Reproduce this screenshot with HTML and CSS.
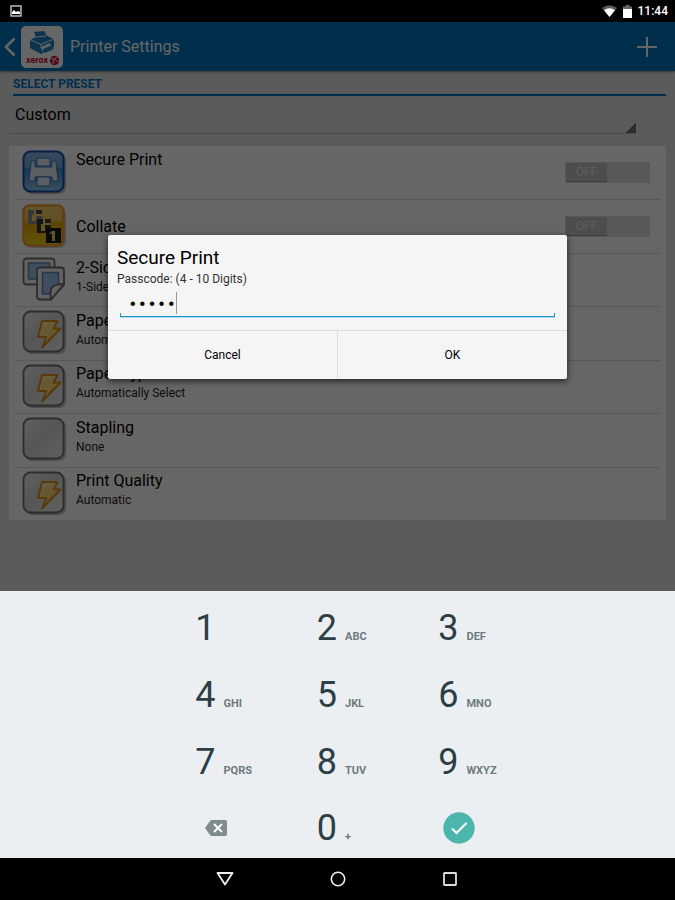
FILE: index.html
```html
<!DOCTYPE html>
<html lang="en">
<head>
  <meta charset="UTF-8">
  <meta name="viewport" content="width=device-width, initial-scale=1.0">
  <title>Printer Settings</title>
  <link rel="stylesheet" href="styles.css">
</head>
<body>
  <!-- Shared icon shapes -->
  <svg class="defs" width="0" height="0" aria-hidden="true">
    <defs>
      <linearGradient id="grayFill" x1="0" y1="0" x2="1" y2="1">
        <stop offset="0" stop-color="#f2f2f2"></stop>
        <stop offset="0.45" stop-color="#d6d6d6"></stop>
        <stop offset="1" stop-color="#f2f2f2"></stop>
      </linearGradient>
      <linearGradient id="blueFill" x1="0" y1="0" x2="0" y2="1">
        <stop offset="0" stop-color="#8fb8e4"></stop>
        <stop offset="0.4" stop-color="#6fabe0"></stop>
        <stop offset="0.45" stop-color="#3f8fd0"></stop>
        <stop offset="1" stop-color="#8cc8ee"></stop>
      </linearGradient>
      <linearGradient id="goldFill" x1="0" y1="0" x2="0" y2="1">
        <stop offset="0" stop-color="#f7d27a"></stop>
        <stop offset="0.38" stop-color="#f0c850"></stop>
        <stop offset="0.45" stop-color="#e0a800"></stop>
        <stop offset="1" stop-color="#f8d020"></stop>
      </linearGradient>
      <linearGradient id="boltFill" x1="0" y1="0" x2="0" y2="1">
        <stop offset="0" stop-color="#ffe9a8"></stop>
        <stop offset="1" stop-color="#ffc21e"></stop>
      </linearGradient>
      <symbol id="tile" viewBox="0 0 44 44">
        <rect x="3" y="3" width="41" height="41" rx="7" fill="#000" opacity="0.25"></rect>
        <rect x="1.500" y="1.500" width="40" height="40" rx="7" fill="url(#grayFill)" stroke="#707070" stroke-width="1.800"></rect>
      </symbol>
      <symbol id="bolt" viewBox="0 0 44 44">
        <path d="M20 11h15.500l-4 7.500h7L20 37.500l4.500-10.500h-8.500z" fill="url(#boltFill)" stroke="#dc9018" stroke-width="2" stroke-linejoin="round"></path>
        <path d="M22 13l-4 12h9l-3 6" fill="none" stroke="#fff0c0" stroke-width="1"></path>
      </symbol>
    </defs>
  </svg>

  <!-- Status bar -->
  <div class="status-bar">
    <svg width="12" height="12" viewBox="0 0 12 12" fill="none">
      <rect x="1" y="1" width="10" height="10" stroke="#c8c8c8" stroke-width="1.4"></rect>
      <path d="M2 9V7l2-2 2 2 2-1 2 1v2z" fill="#fff"></path>
    </svg>
    <div class="status-right">
      <svg width="15" height="12" viewBox="0 0 15 12">
        <path d="M0 3Q7.500-2.500 15 3L7.500 12z" fill="#5a5a5a"></path>
        <path d="M2 5.200Q7.500 1.500 13 5.200L7.500 12z" fill="#fff"></path>
      </svg>
      <svg width="9" height="13" viewBox="0 0 9 13">
        <path d="M0 1.500h2.500V0h4v1.500H9V4H0z" fill="#666"></path>
        <path d="M0 4h9v9H0z" fill="#fff"></path>
      </svg>
      <span class="clock">11:44</span>
    </div>
  </div>

  <!-- App screen with the dialog on top -->
  <div class="screen">
    <header class="app-header">
      <button class="icon-button back" aria-label="Back">
        <svg width="12" height="20" viewBox="0 0 12 20" fill="none" stroke="#fff" stroke-width="2.500"><path d="M10.500 1.500L2 10l8.500 8.500"></path></svg>
      </button>
      <svg class="app-logo" width="42" height="42" viewBox="0 0 42 42">
        <rect width="42" height="42" rx="5" fill="#fff"></rect>
        <path d="M13 6l10-1 3 5 7 3v8l-13 7-11-6v-8l6-3z" fill="#1c83c4"></path>
        <path d="M9 13.500l11 5 13-5.500M20 18.500V22M15 11l10-1" fill="none" stroke="#fff" stroke-width="1"></path>
        <path d="M20 21l9-4 1 3-9 5z" fill="#fff"></path>
        <path d="M22 23l7-3 4 3-9 4z" fill="#1c83c4"></path>
        <text x="5" y="37" class="logo-text">xerox</text>
        <circle cx="33.500" cy="34.500" r="4.700" fill="#c8102e"></circle>
        <path d="M29 33c3-1 6 1 9 3M36 31c-3 1-4 4-4 7" fill="none" stroke="#fff" stroke-width="1"></path>
      </svg>
      <h1>Printer Settings</h1>
      <button class="icon-button add" aria-label="Add preset">
        <svg width="20" height="20" viewBox="0 0 20 20" stroke="#fff" stroke-width="2"><path d="M10 0v20M0 10h20"></path></svg>
      </button>
    </header>

    <main class="settings">
      <label class="section-title" for="preset">SELECT PRESET</label>
      <select id="preset" class="preset">
        <option>Custom</option>
      </select>

      <ul class="options">
        <li class="option">
          <svg class="option-icon" viewBox="0 0 44 44">
            <rect x="3" y="3" width="41" height="41" rx="7" fill="#000" opacity="0.25"></rect>
            <rect x="1.500" y="1.500" width="40" height="40" rx="7" fill="url(#blueFill)" stroke="#1d4fae" stroke-width="2"></rect>
            <g fill="#e6edf5" stroke="#3c6fb8" stroke-width="1" stroke-linejoin="round">
              <path d="M15 8h13v8H15z"></path>
              <path d="M10 11h2q1 0 1 2v4h17v-4q0-2 1-2h2q1 0 1 2l2 16q0 2-2 2h-4v-4H13v4H9q-2 0-2-2l2-16q0-2 1-2z"></path>
              <path d="M15 27h13v9H15z"></path>
            </g>
          </svg>
          <div class="option-text"><h2>Secure Print</h2><p></p></div>
          <label class="switch"><input type="checkbox" aria-label="Secure Print"><span>OFF</span></label>
        </li>
        <li class="option">
          <svg class="option-icon" viewBox="0 0 44 44">
            <rect x="3" y="3" width="41" height="41" rx="7" fill="#000" opacity="0.2"></rect>
            <rect x="1.500" y="1.500" width="40" height="40" rx="6" fill="url(#goldFill)" stroke="#f0a030" stroke-width="2.500"></rect>
            <path d="M6 6h14v14H6z" fill="#8a8a8a"></path>
            <path d="M15 15h14v14H15z" fill="#333"></path>
            <path d="M24 24h15v15H24z" fill="#1a1a1a"></path>
            <path d="M12 6h8v6h-6v5h-4v-6h2zM21 15h8v6h-6v6h-4v-7h2zM33 27v10h-3v-7h-3l3-3z" fill="#f5d468"></path>
            <path d="M14 6h6v4h-6zM23 15h6v4h-6z" fill="#444"></path>
          </svg>
          <div class="option-text"><h2>Collate</h2></div>
          <label class="switch"><input type="checkbox" aria-label="Collate"><span>OFF</span></label>
        </li>
        <li class="option">
          <svg class="option-icon" viewBox="0 0 44 44" stroke-linejoin="round">
            <rect x="1.500" y="1.500" width="31" height="26" rx="3" fill="#f4f4f4" stroke="#707070" stroke-width="1.800"></rect>
            <path d="M6.500 6h21v16h-21z" fill="#9cc4e8" stroke="#5b86bd" stroke-width="1.500"></path>
            <path d="M18 10.500h21q3 0 3 3V28L29 42.500H18q-3 0-3-3v-26q0-3 3-3z" fill="#f4f4f4" stroke="#707070" stroke-width="1.800"></path>
            <path d="M20.500 15.500h16V28l-8 9h-8z" fill="#9cc4e8" stroke="#5b86bd" stroke-width="1.500"></path>
            <path d="M42 27L29 42.500q-1-7 0-10.500 2-5 13-5z" fill="#f4f4f4" stroke="#707070" stroke-width="1.800"></path>
          </svg>
          <div class="option-text"><h2>2-Sided</h2><p>1-Sided</p></div>
        </li>
        <li class="option">
          <svg class="option-icon" viewBox="0 0 44 44"><use href="#tile"></use><use href="#bolt"></use></svg>
          <div class="option-text"><h2>Paper Size</h2><p>Automatic</p></div>
        </li>
        <li class="option">
          <svg class="option-icon" viewBox="0 0 44 44"><use href="#tile"></use><use href="#bolt"></use></svg>
          <div class="option-text"><h2>Paper Type</h2><p>Automatically Select</p></div>
        </li>
        <li class="option">
          <svg class="option-icon" viewBox="0 0 44 44"><use href="#tile"></use></svg>
          <div class="option-text"><h2>Stapling</h2><p>None</p></div>
        </li>
        <li class="option">
          <svg class="option-icon" viewBox="0 0 44 44"><use href="#tile"></use><use href="#bolt"></use></svg>
          <div class="option-text"><h2>Print Quality</h2><p>Automatic</p></div>
        </li>
      </ul>
    </main>

    <div class="overlay">
      <form class="dialog" role="dialog" aria-labelledby="dialogTitle">
        <div class="dialog-body">
          <h2 id="dialogTitle">Secure Print</h2>
          <label for="passcode">Passcode: (4 - 10 Digits)</label>
          <div class="passcode-field">
            <input type="password" id="passcode" value="12345" maxlength="10">
            <span class="caret"></span>
          </div>
        </div>
        <div class="dialog-buttons">
          <button type="button">Cancel</button>
          <button type="button">OK</button>
        </div>
      </form>
    </div>
  </div>

  <!-- Number keypad -->
  <div class="keypad">
    <div class="keys">
      <button class="key">1</button>
      <button class="key">2<small>ABC</small></button>
      <button class="key">3<small>DEF</small></button>
      <button class="key">4<small>GHI</small></button>
      <button class="key">5<small>JKL</small></button>
      <button class="key">6<small>MNO</small></button>
      <button class="key">7<small>PQRS</small></button>
      <button class="key">8<small>TUV</small></button>
      <button class="key">9<small>WXYZ</small></button>
      <button class="key action" aria-label="Delete">
        <svg width="22" height="16" viewBox="0 0 22 16">
          <path d="M7 0h13q2 0 2 2v12q0 2-2 2H7q-1 0-2-1L0 8l5-7q1-1 2-1z" fill="#7f8b8f"></path>
          <path d="M9 4l8 8M17 4l-8 8" stroke="#fff" stroke-width="2"></path>
        </svg>
      </button>
      <button class="key">0<small>+</small></button>
      <button class="key action" aria-label="Done">
        <svg width="32" height="32" viewBox="0 0 32 32">
          <circle cx="16" cy="16" r="15.700" fill="#4db6ac"></circle>
          <path d="M9 16.500l4.500 4.500L23.500 11" fill="none" stroke="#fff" stroke-width="2"></path>
        </svg>
      </button>
    </div>
  </div>

  <!-- System navigation -->
  <nav class="nav-bar">
    <button aria-label="Back"><svg width="18" height="16" viewBox="0 0 18 16"><path d="M1.500 2h15L9 13.500z" fill="none" stroke="#eee" stroke-width="1.800" stroke-linejoin="round"></path></svg></button>
    <button aria-label="Home"><svg width="16" height="16" viewBox="0 0 16 16"><circle cx="8" cy="8" r="6.700" fill="none" stroke="#eee" stroke-width="1.600"></circle></svg></button>
    <button aria-label="Recent apps"><svg width="14" height="14" viewBox="0 0 14 14"><rect x="1" y="1" width="12" height="12" rx="0.500" fill="none" stroke="#ddd" stroke-width="1.800"></rect></svg></button>
  </nav>
</body>
</html>
```
FILE: styles.css
```css
/* Reset and base styles */
* {
  margin: 0;
  padding: 0;
  box-sizing: border-box;
}

body {
  background-color: #000;
  color: #000;
  font-family: Roboto, sans-serif;
  font-size: 16px;
  min-height: 100vh;
  display: flex;
  flex-direction: column;
}

button,
select,
input {
  font-family: inherit;
  background: none;
  border: none;
  border-radius: 0;
  color: inherit;
}

button {
  cursor: pointer;
}

svg {
  display: block;
  flex: none;
}

.defs {
  position: absolute;
}

/* Status bar */
.status-bar {
  height: 22px;
  padding: 0 7px 0 10px;
  display: flex;
  justify-content: space-between;
  align-items: center;
  color: #fff;
}

.status-right {
  display: flex;
  align-items: center;
  gap: 6px;
}

.clock {
  font-size: 12px;
  font-weight: 500;
  line-height: 22px;
}

/* App screen */
.screen {
  flex: 1;
  position: relative;
  background-color: #e4e4e4;
}

.app-header {
  height: 49px;
  padding: 0 18px 0 4px;
  display: flex;
  align-items: center;
  background-color: #0077c4;
  box-shadow: 0 1px 2px rgba(0, 0, 0, 0.4);
  color: #fff;
}

.app-header h1 {
  flex: 1;
  font-size: 16px;
  font-weight: 400;
}

.app-logo {
  margin: 0 7px 0 5px;
}

.logo-text {
  font-family: Roboto, sans-serif;
  font-size: 9px;
  font-weight: 700;
  fill: #c8102e;
}

.settings {
  padding: 4px 9px 0;
}

.section-title {
  display: block;
  margin-left: 4px;
  border-bottom: 2px solid #0077c4;
  color: #0077c4;
  font-size: 12px;
  font-weight: 700;
  line-height: 18px;
  padding-bottom: 1px;
}

.preset {
  display: block;
  width: calc(100% - 30px);
  height: 38px;
  padding-left: 6px;
  appearance: none;
  font-size: 16px;
  border-bottom: 1px solid #b8b8b8;
  background: linear-gradient(135deg, transparent 50%, #707070 50%) right bottom / 11px 11px no-repeat;
}

.options {
  margin-top: 12px;
  padding: 0 6px;
  min-height: 374px;
  list-style: none;
  display: grid;
  grid-auto-rows: 1fr;
  background-color: #fff;
}

.option {
  display: flex;
  align-items: center;
  padding: 0 10px 0 7px;
}

.option + .option {
  border-top: 1px solid #dcdcdc;
}

.option-icon {
  width: 44px;
  height: 44px;
  margin-bottom: 2px;
}

.option-text {
  flex: 1;
  margin-left: 10px;
}

.option-text h2 {
  font-size: 16px;
  font-weight: 400;
  line-height: 20px;
}

.option-text p {
  min-height: 18px;
  margin-bottom: 7px;
  color: #222;
  font-size: 12px;
  line-height: 18px;
}

/* Switches */
.switch {
  display: flex;
  width: 85px;
  height: 21px;
  padding: 1px;
  background-color: #dcdcdc;
}

.switch input {
  position: absolute;
  appearance: none;
}

.switch span {
  width: 41px;
  border-bottom: 1px solid #999;
  background-color: #c0c0c0;
  color: #e8e8e8;
  font-size: 12px;
  line-height: 19px;
  text-align: center;
}

/* Dialog */
.overlay {
  position: absolute;
  inset: 0;
  display: flex;
  justify-content: center;
  align-items: center;
  background-color: rgba(0, 0, 0, 0.6);
}

.dialog {
  width: 68%;
  border-radius: 2px;
  background-color: #f5f5f5;
  box-shadow: 0 2px 6px rgba(0, 0, 0, 0.7);
}

.dialog-body {
  padding: 11px 12px 12px;
}

.dialog-body h2,
.dialog-body label {
  display: block;
  margin-left: -3px;
}

.dialog-body h2 {
  font-size: 19px;
  font-weight: 400;
  line-height: 24px;
}

.dialog-body label {
  color: #333;
  font-size: 12px;
  line-height: 18px;
}

.passcode-field {
  position: relative;
  padding-bottom: 1px;
  background:
    linear-gradient(#1795cc, #1795cc) left bottom 1px / 1px 4px no-repeat,
    linear-gradient(#1795cc, #1795cc) right bottom 1px / 1px 4px no-repeat,
    linear-gradient(#1795cc, #1795cc) left bottom 1px / 100% 1px no-repeat,
    linear-gradient(#b5dced, #b5dced) left bottom / 100% 1px no-repeat;
}

.passcode-field input {
  display: block;
  width: 100%;
  height: 29px;
  padding: 5px 8px 0;
  outline: none;
  font-family: "Liberation Mono", monospace;
  font-size: 16px;
}

.caret {
  position: absolute;
  left: 56px;
  top: 4px;
  width: 1px;
  height: 22px;
  background-color: #999;
}

.dialog-buttons {
  display: flex;
  border-top: 1px solid #dcdcdc;
}

.dialog-buttons button {
  flex: 1;
  height: 48px;
  font-size: 12px;
}

.dialog-buttons button + button {
  border-left: 1px solid #dcdcdc;
}

/* Number keypad */
.keypad {
  background-color: #eceff1;
}

.keys {
  width: 54%;
  margin: 0 auto;
  display: grid;
  grid-template-columns: repeat(3, 1fr);
  grid-auto-rows: 1fr;
  min-height: 267px;
}

.key {
  display: flex;
  align-items: baseline;
  gap: 8px;
  padding: 9px 0 0 40px;
  color: #2c3e46;
  font-size: 36px;
  line-height: 57px;
}

.key small {
  color: #6d7b81;
  font-size: 11px;
  font-weight: 700;
  line-height: 12px;
}

.key.action {
  align-items: center;
  justify-content: center;
  padding: 7px 0 0;
}

/* System navigation */
.nav-bar {
  width: 50%;
  height: 42px;
  margin: 0 auto;
  display: grid;
  grid-template-columns: repeat(3, 1fr);
}

.nav-bar button {
  display: flex;
  align-items: center;
  justify-content: center;
}
```
